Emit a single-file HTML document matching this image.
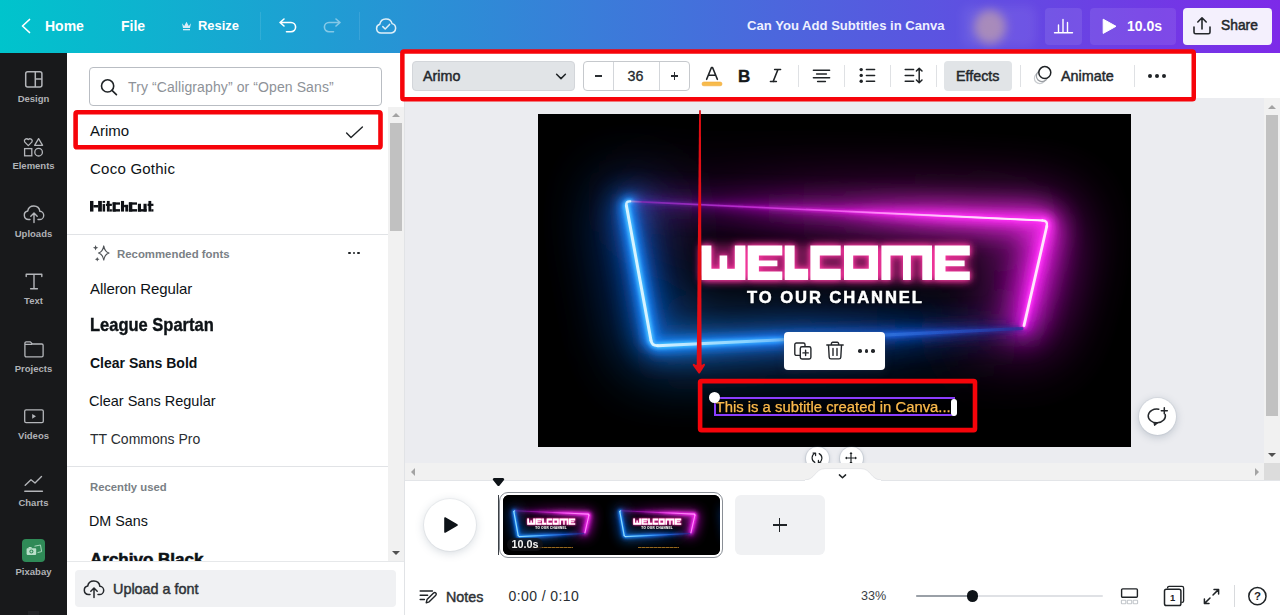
<!DOCTYPE html>
<html><head><meta charset="utf-8">
<style>
*{box-sizing:border-box;margin:0;padding:0}
html,body{width:1280px;height:615px;overflow:hidden;background:#fff;font-family:"Liberation Sans",sans-serif;}
.abs{position:absolute}
#hdr{position:absolute;left:0;top:0;width:1280px;height:53px;background:linear-gradient(90deg,#00c4cc 0%,#7d2ae8 100%);}
.ht{position:absolute;color:#fff;font-weight:bold;font-size:14px;line-height:16px;top:18px;white-space:nowrap}
#nav{position:absolute;left:0;top:53px;width:67.3px;height:562px;background:#18191b}
.nl{position:absolute;width:67px;left:0;text-align:center;color:#b0b2b6;font-size:9.5px;font-weight:bold;line-height:11px}
#panel{position:absolute;left:67px;top:53px;width:337px;height:562px;background:#fff}
.fi{position:absolute;left:90px;font-size:15px;color:#0d1216;white-space:nowrap;line-height:18px}
#tb{position:absolute;left:404px;top:53px;width:876px;height:45px;background:#fff}
#ws{position:absolute;left:404px;top:98px;width:876px;height:380px;background:#ebecf0}
#tl{position:absolute;left:404px;top:478px;width:876px;height:97px;background:#fff}
#bb{position:absolute;left:404px;top:575px;width:876px;height:40px;background:#fff}
.red{position:absolute;border:4px solid #f5050b;border-radius:3px}
.sep{position:absolute;width:1px;background:#dfe1e4;top:65px;height:22px}
</style></head><body>
<div id="hdr"></div>
<div id="nav"></div>
<div id="panel"></div>
<div id="tb"></div>
<div id="ws"></div>
<div id="tl"></div>
<div id="bb"></div>
<!--HEADER-->
<svg class="abs" style="left:18px;top:16px" width="16" height="20" viewBox="0 0 16 20"><path d="M11.5 3.5 L4.5 10 L11.5 16.5" fill="none" stroke="#fff" stroke-width="1.7" stroke-linecap="round" stroke-linejoin="round"/></svg>
<div class="ht" style="left:45px">Home</div>
<div class="ht" style="left:121px">File</div>
<svg class="abs" style="left:181px;top:21px" width="11" height="10" viewBox="0 0 11 10"><path d="M1 2.2 L3.2 5 L5.5 0.8 L7.8 5 L10 2.2 L9 7 L2 7 Z" fill="#d9ecf7"/><rect x="2" y="8" width="7" height="1.3" fill="#d9ecf7"/></svg>
<div class="ht" style="left:198px;font-size:12.9px">Resize</div>
<div class="abs" style="left:260px;top:12px;width:1px;height:28px;background:rgba(255,255,255,.1)"></div>
<svg class="abs" style="left:277px;top:15px" width="22" height="22" viewBox="0 0 22 22"><path d="M7 4 L3 7.5 L7 11 M3.5 7.5 H14 a4.6 4.6 0 0 1 0 9.2 H9.5" fill="none" stroke="#fff" stroke-width="1.6" stroke-linecap="round" stroke-linejoin="round"/></svg>
<svg class="abs" style="left:321px;top:15px;opacity:.45" width="22" height="22" viewBox="0 0 22 22"><path d="M15 4 L19 7.5 L15 11 M18.5 7.5 H8 a4.6 4.6 0 0 0 0 9.2 H12.5" fill="none" stroke="#fff" stroke-width="1.6" stroke-linecap="round" stroke-linejoin="round"/></svg>
<div class="abs" style="left:359px;top:12px;width:1px;height:28px;background:rgba(255,255,255,.1)"></div>
<svg class="abs" style="left:374px;top:14px;opacity:.85" width="24" height="24" viewBox="0 0 24 24"><path d="M7 19 a4.5 4.5 0 0 1 -1.2 -8.8 a6.3 6.3 0 0 1 12.3 -0.6 a4.8 4.8 0 0 1 -0.9 9.4 Z" fill="none" stroke="#fff" stroke-width="1.5" stroke-linejoin="round"/><path d="M8.8 12.6 L11.2 15 L15.6 10.4" fill="none" stroke="#fff" stroke-width="1.5" stroke-linecap="round" stroke-linejoin="round"/></svg>
<div class="ht" id="title" style="left:747px;color:#eef0ff;font-size:13.1px">Can You Add Subtitles in Canva</div>
<div class="abs" style="left:962px;top:6px;width:74px;height:41px;border-radius:8px;background:rgba(255,255,255,.07);filter:blur(5px)"></div>
<div class="abs" style="left:974px;top:10px;width:32px;height:34px;border-radius:50%;background:#b394b4;filter:blur(5px);opacity:.85"></div>
<div class="abs" style="left:1045px;top:8px;width:37px;height:37px;border-radius:4px;background:rgba(255,255,255,.09)"></div>
<svg class="abs" style="left:1053px;top:16px" width="22" height="20" viewBox="0 0 22 20"><path d="M1.5 16.7 H19.5 M5.5 16 V9 M10 16 V3.5 M14.5 16 V6.5" fill="none" stroke="#fff" stroke-width="1.4" stroke-linecap="round"/></svg>
<div class="abs" style="left:1090px;top:8px;width:86px;height:37px;border-radius:4px;background:rgba(255,255,255,.09)"></div>
<svg class="abs" style="left:1102px;top:18px" width="16" height="17" viewBox="0 0 16 17"><path d="M1.2 1.2 L14 8.3 L1.2 15.4 Z" fill="#fff" stroke="#fff" stroke-width="1" stroke-linejoin="round"/></svg>
<div class="ht" style="left:1127px">10.0s</div>
<div class="abs" style="left:1183px;top:8px;width:89px;height:37px;border-radius:4px;background:#f4f0fd"></div>
<svg class="abs" style="left:1192px;top:15px" width="20" height="22" viewBox="0 0 20 22"><path d="M10 14 V3.2 M5.8 7 L10 2.8 L14.2 7 M2 12 V17.2 a1.6 1.6 0 0 0 1.6 1.6 H16.4 a1.6 1.6 0 0 0 1.6 -1.6 V12" fill="none" stroke="#24272b" stroke-width="1.6" stroke-linecap="round" stroke-linejoin="round"/></svg>
<div class="ht" style="left:1221px;color:#24272b;font-size:13.8px;font-weight:normal;-webkit-text-stroke:.5px #24272b">Share</div>

<!--NAV-->
<svg class="abs" style="left:24px;top:70px" width="20" height="19" viewBox="0 0 20 19"><rect x="1.7" y="1.7" width="16.2" height="15.2" rx="2" fill="none" stroke="#b4b6ba" stroke-width="1.5"/><path d="M11.3 1.7 V16.9 M11.3 9 H17.9" stroke="#b4b6ba" stroke-width="1.5" fill="none"/></svg>
<div class="nl" style="top:93px">Design</div>
<svg class="abs" style="left:22px;top:136px" width="23" height="22" viewBox="0 0 23 22"><path d="M6.3 9.6 L2.6 5.9 a2.2 2.2 0 0 1 3.7 -2.3 a2.2 2.2 0 0 1 3.7 2.3 Z" fill="none" stroke="#b4b6ba" stroke-width="1.3" stroke-linejoin="round"/><path d="M16.6 2.6 L20.6 9.3 H12.6 Z" fill="none" stroke="#b4b6ba" stroke-width="1.3" stroke-linejoin="round"/><rect x="2.6" y="12.6" width="7.2" height="7.2" fill="none" stroke="#b4b6ba" stroke-width="1.3"/><circle cx="16.6" cy="16.2" r="3.8" fill="none" stroke="#b4b6ba" stroke-width="1.3"/></svg>
<div class="nl" style="top:160px">Elements</div>
<svg class="abs" style="left:22px;top:203px" width="24" height="22" viewBox="0 0 24 22"><path d="M8 16.5 H6.5 a4.3 4.3 0 0 1 -0.8 -8.5 a6.2 6.2 0 0 1 12.2 0.3 a4.1 4.1 0 0 1 -0.6 8.2 H16" fill="none" stroke="#b4b6ba" stroke-width="1.4" stroke-linecap="round" stroke-linejoin="round"/><path d="M12 19.5 V10.2 M8.8 13.2 L12 10 L15.2 13.2" fill="none" stroke="#b4b6ba" stroke-width="1.4" stroke-linecap="round" stroke-linejoin="round"/></svg>
<div class="nl" style="top:228px">Uploads</div>
<svg class="abs" style="left:24px;top:272px" width="20" height="19" viewBox="0 0 20 19"><path d="M2.2 4.6 V2.2 H17.8 V4.6 M10 2.2 V16.8 M6.6 16.8 H13.4" fill="none" stroke="#b4b6ba" stroke-width="1.4" stroke-linecap="round" stroke-linejoin="round"/></svg>
<div class="nl" style="top:295px">Text</div>
<svg class="abs" style="left:23px;top:340px" width="22" height="19" viewBox="0 0 22 19"><path d="M1.9 3.2 a1.3 1.3 0 0 1 1.3 -1.3 H7.4 L9.4 4 H18.8 a1.3 1.3 0 0 1 1.3 1.3 V15.5 a1.3 1.3 0 0 1 -1.3 1.3 H3.2 a1.3 1.3 0 0 1 -1.3 -1.3 Z M1.9 4.3 H9" fill="none" stroke="#b4b6ba" stroke-width="1.3" stroke-linejoin="round"/></svg>
<div class="nl" style="top:363px">Projects</div>
<svg class="abs" style="left:23px;top:408px" width="22" height="17" viewBox="0 0 22 17"><rect x="1.7" y="1.9" width="18.6" height="12.8" rx="1.4" fill="none" stroke="#b4b6ba" stroke-width="1.3"/><path d="M9.2 5.9 L13 8.3 L9.2 10.7 Z" fill="#b4b6ba"/></svg>
<div class="nl" style="top:430px">Videos</div>
<svg class="abs" style="left:23px;top:474px" width="22" height="20" viewBox="0 0 22 20"><path d="M2.2 11.2 L8 5.8 L12 9 L18.5 2.5" fill="none" stroke="#b4b6ba" stroke-width="1.4" stroke-linecap="round" stroke-linejoin="round"/><path d="M1.8 17.2 H19.4" stroke="#b4b6ba" stroke-width="1.5" stroke-linecap="round"/></svg>
<div class="nl" style="top:497px">Charts</div>
<div class="abs" style="left:22px;top:539px;width:23px;height:23px;border-radius:4px;background:#2f8a57"></div>
<svg class="abs" style="left:25px;top:544px" width="18" height="13" viewBox="0 0 18 13"><path d="M9.5 2.2 L15.5 1 L16.6 7.6 L12.5 8.6" fill="none" stroke="#a9d8bd" stroke-width="1"/><rect x="1.6" y="4.3" width="9.6" height="6.6" rx=".8" fill="#b9e0ca"/><rect x="3.6" y="3" width="3" height="1.6" fill="#b9e0ca"/><circle cx="6.4" cy="7.6" r="2" fill="#2f8a57"/><circle cx="6.4" cy="7.6" r="1" fill="#b9e0ca"/></svg>
<div class="nl" style="top:566px">Pixabay</div>
<div class="abs" style="left:28px;top:611px;width:11px;height:4px;background:#222326"></div>

<!--PANEL-->
<div class="abs" style="left:89px;top:67px;width:293px;height:39px;border:1px solid #b9bdc3;border-radius:4px;background:#fff"></div>
<svg class="abs" style="left:98px;top:77px" width="22" height="20" viewBox="0 0 22 20"><circle cx="9.6" cy="8.9" r="6.1" fill="none" stroke="#1f2326" stroke-width="1.6"/><path d="M14 13.4 L18.4 17.6" stroke="#1f2326" stroke-width="1.7" stroke-linecap="round"/></svg>
<div class="abs" id="ph" style="left:128px;top:78px;font-size:14px;line-height:18px;color:#8e9298;white-space:nowrap;letter-spacing:.1px">Try “Calligraphy” or “Open Sans”</div>
<div class="abs" style="left:388px;top:107px;width:16px;height:455px;background:#f1f1f1"></div>
<div class="abs" style="left:390px;top:123px;width:12px;height:108px;background:#c1c1c1"></div>
<svg class="abs" style="left:391px;top:112px" width="10" height="6" viewBox="0 0 10 6"><path d="M1 5 L5 1 L9 5 Z" fill="#a3a3a3"/></svg>
<svg class="abs" style="left:391px;top:550px" width="10" height="6" viewBox="0 0 10 6"><path d="M1 1 L5 5 L9 1 Z" fill="#505050"/></svg>
<div class="fi" style="top:122px">Arimo</div>
<svg class="abs" style="left:344px;top:124px" width="22" height="16" viewBox="0 0 22 16"><path d="M2.6 9 L7 13.4 L18.4 3" fill="none" stroke="#1f2326" stroke-width="1.4" stroke-linecap="round" stroke-linejoin="round"/></svg>
<div class="fi" id="coco" style="top:160px;letter-spacing:.24px">Coco Gothic</div>
<svg class="abs" style="left:85px;top:195px" width="80" height="24" viewBox="0 0 1280 384" fill="#0e1015"><rect x="80" y="95" width="55" height="170"/><rect x="210" y="95" width="60" height="170"/><rect x="135" y="160" width="75" height="40"/><rect x="282" y="95" width="40" height="30"/><rect x="282" y="145" width="40" height="120"/><rect x="350" y="95" width="45" height="170"/><rect x="335" y="140" width="95" height="35"/><rect x="395" y="228" width="35" height="37"/><rect x="442" y="118" width="50" height="147"/><rect x="442" y="118" width="118" height="37"/><rect x="442" y="226" width="118" height="39"/><rect x="575" y="95" width="50" height="170"/><rect x="625" y="158" width="65" height="37"/><rect x="645" y="158" width="45" height="107"/><rect x="702" y="118" width="55" height="147"/><rect x="702" y="118" width="130" height="37"/><rect x="702" y="226" width="130" height="39"/><rect x="846" y="140" width="50" height="125"/><rect x="936" y="140" width="50" height="125"/><rect x="846" y="226" width="140" height="39"/><rect x="1015" y="95" width="45" height="170"/><rect x="1000" y="140" width="95" height="35"/><rect x="1060" y="228" width="35" height="37"/></svg>
<div class="abs" style="left:67px;top:234px;width:321px;height:1px;background:#e1e3e6"></div>
<svg class="abs" style="left:90px;top:244px" width="20" height="20" viewBox="0 0 20 20"><path d="M13.75 2 Q14.686 7.74 18.95 9 Q14.686 10.26 13.75 16 Q12.814 10.26 8.55 9 Q12.814 7.74 13.75 2 Z" fill="none" stroke="#4f5357" stroke-width="1.25" stroke-linejoin="round"/><path d="M5.6 1.0499999999999998 Q5.869999999999999 3.48 8.3 3.75 Q5.869999999999999 4.02 5.6 6.45 Q5.33 4.02 2.8999999999999995 3.75 Q5.33 3.48 5.6 1.0499999999999998 Z" fill="#4f5357"/><path d="M7.25 12.95 Q7.48 15.02 9.55 15.25 Q7.48 15.48 7.25 17.55 Q7.02 15.48 4.95 15.25 Q7.02 15.02 7.25 12.95 Z" fill="#4f5357"/></svg>
<div class="abs" id="rec" style="left:117px;top:247px;font-size:11.4px;font-weight:bold;line-height:14px;color:#7a7f85;white-space:nowrap">Recommended fonts</div>
<div class="abs" style="left:348px;top:251.5px;width:12px;height:3px"><i class="abs" style="left:0;top:0;width:2.6px;height:2.6px;border-radius:50%;background:#1f2326"></i><i class="abs" style="left:4.6px;top:0;width:2.6px;height:2.6px;border-radius:50%;background:#1f2326"></i><i class="abs" style="left:9.2px;top:0;width:2.6px;height:2.6px;border-radius:50%;background:#1f2326"></i></div>
<div class="fi" id="all" style="top:280px;letter-spacing:-.08px">Alleron Regular</div>
<div class="fi" id="lea" style="top:316px;font-weight:bold;font-size:16.5px;-webkit-text-stroke:.35px #0d1216;transform-origin:0 80%;transform:scaleY(1.08)">League Spartan</div>
<div class="fi" id="csb" style="top:354px;font-weight:bold;font-size:14px">Clear Sans Bold</div>
<div class="fi" id="csr" style="top:392px;left:89px;font-size:14.5px">Clear Sans Regular</div>
<div class="fi" id="ttc" style="top:430px;color:#2a2e32;font-size:14px">TT Commons Pro</div>
<div class="abs" style="left:67px;top:466px;width:321px;height:1px;background:#e1e3e6"></div>
<div class="abs" id="ru" style="left:90px;top:480px;font-size:11.3px;font-weight:bold;line-height:14px;color:#7a7f85;white-space:nowrap">Recently used</div>
<div class="fi" id="dm" style="top:512px;left:89px;font-size:14.3px">DM Sans</div>
<div class="abs" style="left:67px;top:540px;width:321px;height:22px;overflow:hidden"><div class="fi" id="arc" style="left:23px;top:11px;font-weight:bold;font-size:17px;-webkit-text-stroke:.6px #0d1216">Archivo Black</div></div>
<div class="abs" style="left:67px;top:561px;width:337px;height:1px;background:#e6e8ea"></div>
<div class="abs" style="left:75px;top:570px;width:321px;height:37px;border-radius:4px;background:#f0f1f3"></div>
<svg class="abs" style="left:82px;top:578px" width="24" height="22" viewBox="0 0 24 22"><path d="M8 16.5 H6.5 a4.3 4.3 0 0 1 -0.8 -8.5 a6.2 6.2 0 0 1 12.2 0.3 a4.1 4.1 0 0 1 -0.6 8.2 H16" fill="none" stroke="#24272b" stroke-width="1.5" stroke-linecap="round" stroke-linejoin="round"/><path d="M12 19.5 V10.2 M8.8 13.2 L12 10 L15.2 13.2" fill="none" stroke="#24272b" stroke-width="1.5" stroke-linecap="round" stroke-linejoin="round"/></svg>
<div class="abs" id="up" style="left:113px;top:580.5px;font-size:14.4px;line-height:17px;color:#2e3236;-webkit-text-stroke:.45px #2e3236;white-space:nowrap">Upload a font</div>

<!--TOOLBAR-->
<div class="abs" style="left:412px;top:61px;width:163px;height:30px;border-radius:4px;background:#e1e4e7;border:1px solid #d3d6da"></div>
<div class="abs" id="tbf" style="margin-top:.9px;left:423px;top:67px;font-size:14.3px;line-height:17px;color:#24282c;-webkit-text-stroke:.45px #24282c">Arimo</div>
<svg class="abs" style="left:554px;top:71px" width="14" height="11" viewBox="0 0 14 11"><path d="M2.6 3.2 L7 7.6 L11.4 3.2" fill="none" stroke="#1f2326" stroke-width="1.5" stroke-linecap="round" stroke-linejoin="round"/></svg>
<div class="abs" style="left:583px;top:61px;width:106.6px;height:30px;border-radius:4px;border:1px solid #c6c9cd;background:#fff"></div>
<div class="abs" style="left:613px;top:62px;width:1px;height:28px;background:#d3d6da"></div>
<div class="abs" style="left:659px;top:62px;width:1px;height:28px;background:#d3d6da"></div>
<div class="abs" style="left:594.5px;top:75.4px;width:7.6px;height:1.5px;background:#2b2f33"></div>
<div class="abs" id="tb36" style="margin-top:.9px;left:627.6px;top:67px;font-size:14.3px;line-height:17px;color:#24282c;-webkit-text-stroke:.3px #24282c">36</div>
<div class="abs" style="left:670.6px;top:75.4px;width:7.6px;height:1.5px;background:#2b2f33"></div>
<div class="abs" style="left:673.65px;top:72.35px;width:1.5px;height:7.6px;background:#2b2f33"></div>
<svg class="abs" style="left:700px;top:63px" width="24" height="25" viewBox="0 0 24 25"><path d="M6.6 16.4 L11.4 4.6 H12.6 L17.4 16.4 M8.4 12.2 H15.6" fill="none" stroke="#1f2326" stroke-width="1.5" stroke-linejoin="round" stroke-linecap="round"/><rect x="2" y="19" width="20" height="3.8" rx="1.9" fill="#f7bb4b" stroke="#f2a93b" stroke-width=".6"/></svg>
<div class="abs" id="tbB" style="left:738px;top:67px;font-size:17px;font-weight:bold;line-height:20px;color:#15181b;-webkit-text-stroke:.4px #15181b">B</div>
<svg class="abs" style="left:767px;top:67px" width="17" height="17" viewBox="0 0 17 17"><path d="M7.6 2.6 H13.6 M3.4 14.6 H9.4 M10.9 2.6 L6.1 14.6" fill="none" stroke="#1f2326" stroke-width="1.5" stroke-linecap="round"/></svg>
<div class="sep" style="left:798px"></div>
<svg class="abs" style="left:811px;top:67px" width="21" height="17" viewBox="0 0 21 17"><path d="M2.4 3.2 H18.6 M5.6 7 H15.4 M2.4 10.8 H18.6 M6.6 14.6 H14.4" fill="none" stroke="#1f2326" stroke-width="1.5" stroke-linecap="round"/></svg>
<div class="sep" style="left:844px"></div>
<svg class="abs" style="left:857px;top:66px" width="20" height="19" viewBox="0 0 20 19"><circle cx="4.2" cy="3.6" r="1.7" fill="#1f2326"/><circle cx="4.2" cy="9.4" r="1.7" fill="#1f2326"/><circle cx="4.2" cy="15.2" r="1.7" fill="#1f2326"/><path d="M9.4 3.6 H17.6 M9.4 9.4 H17.6 M9.4 15.2 H17.6" stroke="#1f2326" stroke-width="1.5" stroke-linecap="round"/></svg>
<div class="sep" style="left:890px"></div>
<svg class="abs" style="left:902px;top:65px" width="23" height="21" viewBox="0 0 23 21"><path d="M3.2 4.6 H11.6 M3.2 10.4 H11.6 M3.2 16.2 H11.6" stroke="#1f2326" stroke-width="1.5" stroke-linecap="round"/><path d="M17.2 3.6 V17.4 M14.4 6 L17.2 3.2 L20 6 M14.4 15 L17.2 17.8 L20 15" fill="none" stroke="#1f2326" stroke-width="1.5" stroke-linecap="round" stroke-linejoin="round"/></svg>
<div class="sep" style="left:936px"></div>
<div class="abs" style="left:944px;top:61px;width:68px;height:30px;border-radius:4px;background:#e1e4e7"></div>
<div class="abs" id="tbe" style="margin-top:.9px;left:956px;top:67px;font-size:14.3px;line-height:17px;color:#24282c;-webkit-text-stroke:.45px #24282c">Effects</div>
<div class="sep" style="left:1020px"></div>
<svg class="abs" style="left:1032px;top:64px" width="23" height="23" viewBox="0 0 23 23"><circle cx="7.8" cy="14.2" r="5.4" fill="#fff" stroke="#c9ccd0" stroke-width="1.2"/><circle cx="10" cy="12" r="5.6" fill="#fff" stroke="#9a9ea3" stroke-width="1.2"/><circle cx="12.8" cy="8.6" r="6" fill="#fff" stroke="#1f2326" stroke-width="1.5"/></svg>
<div class="abs" id="tba" style="margin-top:.9px;left:1061px;top:67px;font-size:14.4px;line-height:17px;color:#24282c;-webkit-text-stroke:.45px #24282c">Animate</div>
<div class="sep" style="left:1134px"></div>
<div class="abs" style="left:1148px;top:73.9px;width:18px;height:4px"><i class="abs" style="left:0;top:0;width:4.1px;height:4.1px;border-radius:50%;background:#1f2326"></i><i class="abs" style="left:6.8px;top:0;width:4.1px;height:4.1px;border-radius:50%;background:#1f2326"></i><i class="abs" style="left:13.6px;top:0;width:4.1px;height:4.1px;border-radius:50%;background:#1f2326"></i></div>

<!--CANVAS-->
<!--ART-START--><svg width="0" height="0" style="position:absolute">
<defs>
<linearGradient id="gTop" gradientUnits="userSpaceOnUse" x1="87.6" y1="0" x2="510.0" y2="0"><stop offset="0" stop-color="#2f8cff" stop-opacity=".9"/><stop offset=".035" stop-color="#6a32d8" stop-opacity=".4"/><stop offset=".2" stop-color="#a818c8" stop-opacity=".45"/><stop offset=".45" stop-color="#e018e4" stop-opacity=".8"/><stop offset=".7" stop-color="#f41cf0"/><stop offset="1" stop-color="#ff2df5"/></linearGradient>
<linearGradient id="gTopC" gradientUnits="userSpaceOnUse" x1="87.6" y1="0" x2="510.0" y2="0"><stop offset="0" stop-color="#9fd4ff"/><stop offset=".04" stop-color="#7a2cb0"/><stop offset=".3" stop-color="#c02ad0"/><stop offset=".6" stop-color="#ff6cf6"/><stop offset="1" stop-color="#ffe3fd"/></linearGradient>
<linearGradient id="gBot" gradientUnits="userSpaceOnUse" x1="114.0" y1="0" x2="486.0" y2="0"><stop offset="0" stop-color="#1f8dff"/><stop offset=".4" stop-color="#1a72ee"/><stop offset=".7" stop-color="#144ab8" stop-opacity=".75"/><stop offset="1" stop-color="#2a1a80" stop-opacity=".3"/></linearGradient>
<linearGradient id="gBot2" gradientUnits="userSpaceOnUse" x1="114.0" y1="0" x2="486.0" y2="0"><stop offset="0" stop-color="#46c4ff"/><stop offset=".35" stop-color="#2f9cff"/><stop offset=".65" stop-color="#1c5fd8" stop-opacity=".8"/><stop offset="1" stop-color="#2a2590" stop-opacity=".4"/></linearGradient>
<linearGradient id="gBotC" gradientUnits="userSpaceOnUse" x1="114.0" y1="0" x2="486.0" y2="0"><stop offset="0" stop-color="#d9f3ff"/><stop offset=".25" stop-color="#8ad4ff"/><stop offset=".5" stop-color="#3a8cf0"/><stop offset=".75" stop-color="#2458c8"/><stop offset="1" stop-color="#2a2f9a" stop-opacity=".7"/></linearGradient>
<linearGradient id="gTop2" gradientUnits="userSpaceOnUse" x1="87.6" y1="0" x2="510.0" y2="0"><stop offset=".5" stop-color="#ff30f6" stop-opacity="0"/><stop offset=".75" stop-color="#ff30f6" stop-opacity=".8"/><stop offset="1" stop-color="#ff30f6"/></linearGradient>
<linearGradient id="gTop2C" gradientUnits="userSpaceOnUse" x1="87.6" y1="0" x2="510.0" y2="0"><stop offset=".5" stop-color="#ffd0fb" stop-opacity="0"/><stop offset=".8" stop-color="#ffd8fc" stop-opacity=".9"/><stop offset="1" stop-color="#fff0fe"/></linearGradient>
<linearGradient id="gRight" gradientUnits="userSpaceOnUse" x1="0" y1="106.8" x2="0" y2="211.6"><stop offset="0" stop-color="#ff2df5"/><stop offset=".8" stop-color="#f01ff0"/><stop offset="1" stop-color="#c818d8"/></linearGradient>
<filter id="b40" filterUnits="userSpaceOnUse" x="-150" y="-150" width="893" height="633"><feGaussianBlur stdDeviation="32"/></filter>
<filter id="b16" filterUnits="userSpaceOnUse" x="-150" y="-150" width="893" height="633"><feGaussianBlur stdDeviation="13"/></filter>
<filter id="b6" filterUnits="userSpaceOnUse" x="-150" y="-150" width="893" height="633"><feGaussianBlur stdDeviation="5"/></filter>
<filter id="b2" filterUnits="userSpaceOnUse" x="-150" y="-150" width="893" height="633"><feGaussianBlur stdDeviation="1.8"/></filter>
<filter id="b05" filterUnits="userSpaceOnUse" x="-150" y="-150" width="893" height="633"><feGaussianBlur stdDeviation=".45"/></filter>
<filter id="bw" filterUnits="userSpaceOnUse" x="-150" y="-150" width="893" height="633"><feGaussianBlur stdDeviation="2.6"/></filter>
<symbol id="art" viewBox="0 0 593 333" preserveAspectRatio="none">
<rect width="593" height="333" fill="#000"/>
<g filter="url(#b40)" fill="none" stroke-linecap="round" opacity=".8">
 <path d="M88.4,91.6 L113.0,226.6" stroke="#0a56d8" stroke-width="40"/>
 <path d="M119.5,231.7 L484.0,214.6" stroke="url(#gBot)" stroke-width="34" opacity=".9"/>
 <path d="M92.1,87.4 L504.5,106.5" stroke="url(#gTop)" stroke-width="30" opacity=".85"/>
 <path d="M508.8,112.2 L486.0,211.6" stroke="#e010e8" stroke-width="44"/>
</g>
<g filter="url(#b16)" fill="none" stroke-linecap="round" opacity=".9">
 <path d="M88.4,91.6 L113.0,226.6" stroke="#1273f5" stroke-width="20"/>
 <path d="M119.5,231.7 L484.0,214.6" stroke="url(#gBot)" stroke-width="16"/>
 <path d="M92.1,87.4 L504.5,106.5" stroke="url(#gTop)" stroke-width="15"/>
 <path d="M508.8,112.2 L486.0,211.6" stroke="url(#gRight)" stroke-width="28"/>
 <path d="M298.8,97.0 L504.5,106.5" stroke="url(#gTop2)" stroke-width="24"/>
 <path d="M88.4,91.6 Q87.6,87.2 92.1,87.4" stroke="#1273f5" stroke-width="18"/><path d="M113.0,226.6 Q114.0,232.0 119.5,231.7" stroke="#1273f5" stroke-width="18"/><path d="M504.5,106.5 Q510.0,106.8 508.8,112.2" stroke="#ff2df5" stroke-width="22"/>
</g>
<g filter="url(#b6)" fill="none" stroke-linecap="round">
 <path d="M88.4,91.6 L113.0,226.6" stroke="#1e8cff" stroke-width="14"/>
 <path d="M119.5,231.7 L484.0,214.6" stroke="url(#gBot)" stroke-width="13"/>
 <path d="M92.1,87.4 L504.5,106.5" stroke="url(#gTop)" stroke-width="6"/>
 <path d="M508.8,112.2 L486.0,211.6" stroke="url(#gRight)" stroke-width="12"/>
 <path d="M298.8,97.0 L504.5,106.5" stroke="url(#gTop2)" stroke-width="10"/>
 <path d="M88.4,91.6 Q87.6,87.2 92.1,87.4" stroke="#1e8cff" stroke-width="11"/><path d="M113.0,226.6 Q114.0,232.0 119.5,231.7" stroke="#1e8cff" stroke-width="11"/><path d="M504.5,106.5 Q510.0,106.8 508.8,112.2" stroke="#ff2df5" stroke-width="12"/>
</g>
<g filter="url(#b2)" fill="none" stroke-linecap="round">
 <path d="M88.4,91.6 L113.0,226.6" stroke="#46bcff" stroke-width="7"/>
 <path d="M119.5,231.7 L484.0,214.6" stroke="url(#gBot2)" stroke-width="6.5"/>
 <path d="M92.1,87.4 L504.5,106.5" stroke="url(#gTop)" stroke-width="3"/>
 <path d="M508.8,112.2 L486.0,211.6" stroke="#ff3cf6" stroke-width="6"/>
 <path d="M298.8,97.0 L504.5,106.5" stroke="url(#gTop2)" stroke-width="4.2"/>
 <path d="M88.4,91.6 Q87.6,87.2 92.1,87.4" stroke="#49b4ff" stroke-width="5"/><path d="M113.0,226.6 Q114.0,232.0 119.5,231.7" stroke="#49b4ff" stroke-width="5.6"/><path d="M504.5,106.5 Q510.0,106.8 508.8,112.2" stroke="#ff3cf6" stroke-width="5.6"/>
</g>
<g filter="url(#b05)" fill="none" stroke-linecap="round" stroke-linejoin="round">
 <path d="M88.4,91.6 L113.0,226.6" stroke="#d6f3ff" stroke-width="3"/>
 <path d="M119.5,231.7 L484.0,214.6" stroke="url(#gBotC)" stroke-width="3"/>
 <path d="M92.1,87.4 L504.5,106.5" stroke="url(#gTopC)" stroke-width="1.6"/>
 <path d="M508.8,112.2 L486.0,211.6" stroke="#ffe6fd" stroke-width="2.8"/>
 <path d="M298.8,97.0 L504.5,106.5" stroke="url(#gTop2C)" stroke-width="2.2"/>
 <path d="M88.4,91.6 Q87.6,87.2 92.1,87.4" stroke="#cfeeff" stroke-width="2.4"/><path d="M113.0,226.6 Q114.0,232.0 119.5,231.7" stroke="#d9f3ff" stroke-width="2.8"/><path d="M504.5,106.5 Q510.0,106.8 508.8,112.2" stroke="#ffe6fd" stroke-width="2.5"/>
</g>
<rect x="163" y="130" width="270" height="38" fill="#c02888" opacity=".5" filter="url(#b6)"/>
<path d="M163.4,131.5 H173.4 V154.8 H181.6 V141.6 H189.2 V154.8 H196.8 V131.5 H207.4 V166.0 H163.4 Z M209.7,131.5 H244.3 V141.5 H220.9 V146.6 H239.4 V152.2 H220.9 V157.4 H244.3 V166.0 H209.7 Z M246.7,131.5 H256.6 V154.8 H270.1 V166.0 H246.7 Z M272.4,131.5 H302.7 V141.5 H281.8 V154.8 H302.7 V166.0 H272.4 Z M306.0,131.5 H340.0 V166.0 H306.0 Z M315.2,141.5 V154.8 H330.8 V141.5 Z M343.4,131.5 H394.0 V166.0 H384.3 V141.5 H372.9 V166.0 H365.0 V141.5 H352.5 V166.0 H343.4 Z M396.7,131.5 H431.8 V141.5 H407.5 V146.6 H426.6 V152.2 H407.5 V157.4 H431.8 V166.0 H396.7 Z" fill="#ff2f9e" filter="url(#b6)" opacity=".9"/>
<path d="M163.4,131.5 H173.4 V154.8 H181.6 V141.6 H189.2 V154.8 H196.8 V131.5 H207.4 V166.0 H163.4 Z M209.7,131.5 H244.3 V141.5 H220.9 V146.6 H239.4 V152.2 H220.9 V157.4 H244.3 V166.0 H209.7 Z M246.7,131.5 H256.6 V154.8 H270.1 V166.0 H246.7 Z M272.4,131.5 H302.7 V141.5 H281.8 V154.8 H302.7 V166.0 H272.4 Z M306.0,131.5 H340.0 V166.0 H306.0 Z M315.2,141.5 V154.8 H330.8 V141.5 Z M343.4,131.5 H394.0 V166.0 H384.3 V141.5 H372.9 V166.0 H365.0 V141.5 H352.5 V166.0 H343.4 Z M396.7,131.5 H431.8 V141.5 H407.5 V146.6 H426.6 V152.2 H407.5 V157.4 H431.8 V166.0 H396.7 Z" fill="#ff3fa6" filter="url(#bw)" opacity=".95"/>
<path d="M163.4,131.5 H173.4 V154.8 H181.6 V141.6 H189.2 V154.8 H196.8 V131.5 H207.4 V166.0 H163.4 Z M209.7,131.5 H244.3 V141.5 H220.9 V146.6 H239.4 V152.2 H220.9 V157.4 H244.3 V166.0 H209.7 Z M246.7,131.5 H256.6 V154.8 H270.1 V166.0 H246.7 Z M272.4,131.5 H302.7 V141.5 H281.8 V154.8 H302.7 V166.0 H272.4 Z M306.0,131.5 H340.0 V166.0 H306.0 Z M315.2,141.5 V154.8 H330.8 V141.5 Z M343.4,131.5 H394.0 V166.0 H384.3 V141.5 H372.9 V166.0 H365.0 V141.5 H352.5 V166.0 H343.4 Z M396.7,131.5 H431.8 V141.5 H407.5 V146.6 H426.6 V152.2 H407.5 V157.4 H431.8 V166.0 H396.7 Z" fill="#fff" fill-rule="evenodd"/>
<text x="209" y="189.2" font-family="Liberation Sans, sans-serif" font-weight="bold" font-size="16.6" fill="#fff" stroke="#fff" stroke-width=".5" textLength="175" lengthAdjust="spacing" style="filter:drop-shadow(0 0 2px rgba(0,0,0,.7))">TO OUR CHANNEL</text>
</symbol>
</defs></svg>
<!--ART-END-->
<svg class="abs" style="left:538px;top:114px" width="593" height="333"><use href="#art" width="593" height="333"/></svg>


<!--float toolbar-->
<div class="abs" style="left:784px;top:332px;width:101px;height:37.8px;border-radius:4px;background:#fff;box-shadow:0 0 0 1px rgba(64,87,109,.07),0 2px 8px rgba(40,50,70,.35)"></div>
<svg class="abs" style="left:792px;top:340px" width="22" height="22" viewBox="0 0 22 22"><path d="M7.6 15.4 H4.4 a1.6 1.6 0 0 1 -1.6 -1.6 V4.6 a1.6 1.6 0 0 1 1.6 -1.6 H11.4 a1.6 1.6 0 0 1 1.6 1.6 V6.4" fill="none" stroke="#24272b" stroke-width="1.4" stroke-linecap="round"/><rect x="8.3" y="6.8" width="10.6" height="12.2" rx="1.7" fill="#fff" stroke="#24272b" stroke-width="1.4"/><path d="M13.6 10.2 V15.6 M10.9 12.9 H16.3" stroke="#24272b" stroke-width="1.4" stroke-linecap="round"/></svg>
<svg class="abs" style="left:824px;top:340px" width="22" height="22" viewBox="0 0 22 22"><path d="M2.8 5 H19.2 M7.4 4.8 V3.6 a1.3 1.3 0 0 1 1.3 -1.3 H13.3 a1.3 1.3 0 0 1 1.3 1.3 V4.8 M4.5 5.2 L5.2 17.2 a1.8 1.8 0 0 0 1.8 1.7 H15 a1.8 1.8 0 0 0 1.8 -1.7 L17.5 5.2 M9 8.4 V15.4 M13 8.4 V15.4" fill="none" stroke="#24272b" stroke-width="1.4" stroke-linecap="round" stroke-linejoin="round"/></svg>
<div class="abs" style="left:858px;top:349.3px;width:18px;height:4px"><i class="abs" style="left:0;top:0;width:3.5px;height:3.5px;border-radius:50%;background:#24272b"></i><i class="abs" style="left:6.7px;top:0;width:3.5px;height:3.5px;border-radius:50%;background:#24272b"></i><i class="abs" style="left:13.4px;top:0;width:3.5px;height:3.5px;border-radius:50%;background:#24272b"></i></div>
<!--subtitle-->
<div class="abs" style="left:714px;top:396.7px;width:241px;height:19.8px;border:2px solid #8b3dff"></div>
<div class="abs" id="sub" style="left:715.6px;top:397.5px;font-size:14.85px;line-height:18px;color:#f9ba4e;-webkit-text-stroke:.25px #f9ba4e;white-space:nowrap;text-shadow:0 0 1px #3a2200,0 1px 1px rgba(0,0,0,.8)">This is a subtitle created in Canva...</div>
<div class="abs" style="left:708.8px;top:391.6px;width:11.4px;height:11.4px;border-radius:50%;background:#fff;box-shadow:0 0 2px rgba(0,0,0,.5)"></div>
<div class="abs" style="left:951px;top:398.5px;width:6px;height:17.5px;border-radius:3px;background:#fff;box-shadow:0 0 2px rgba(0,0,0,.5)"></div>
<!--arrow-->
<svg class="abs" style="left:688px;top:108px" width="24" height="270" viewBox="0 0 24 270"><path d="M11.1 2.2 L12.9 2.2 L13.6 259 L8.7 259 Z" fill="#e20d14"/><path d="M5.8 256.8 L11.2 264.4 L15.9 256.8" fill="#e20d14" stroke="#e20d14" stroke-width="2.2" stroke-linejoin="round" stroke-linecap="round"/></svg>
<!--side btn-->
<div class="abs" style="left:1138.7px;top:397.8px;width:37.5px;height:37.5px;border-radius:50%;background:#fff;box-shadow:0 0 0 1px rgba(64,87,109,.06),0 2px 8px rgba(64,87,109,.28)"></div>
<svg class="abs" style="left:1145px;top:404px" width="26" height="26" viewBox="0 0 26 26"><path d="M13.8 5.2 A8.6 6.9 0 1 0 20.2 10.4" fill="none" stroke="#24272b" stroke-width="1.5" stroke-linecap="round"/><path d="M8.9 18.3 L9.6 21.3 L12.6 18.9" fill="#24272b" stroke="#24272b" stroke-width="1.2" stroke-linejoin="round"/><path d="M19.3 3.7 V9.7 M16.3 6.7 H22.3" stroke="#24272b" stroke-width="1.5" stroke-linecap="round"/></svg>
<!--right scrollbar-->
<div class="abs" style="left:1264px;top:98px;width:16px;height:365px;background:#f1f1f1"></div>
<div class="abs" style="left:1266px;top:115px;width:12px;height:301px;background:#c1c1c1"></div>
<svg class="abs" style="left:1267px;top:104px" width="10" height="6" viewBox="0 0 10 6"><path d="M1 5 L5 1 L9 5 Z" fill="#a3a3a3"/></svg>
<svg class="abs" style="left:1267px;top:452px" width="10" height="6" viewBox="0 0 10 6"><path d="M1 1 L5 5 L9 1 Z" fill="#505050"/></svg>
<!--h scrollbar-->
<div class="abs" style="left:404px;top:463px;width:860px;height:17px;background:#f1f1f1"></div>
<div class="abs" style="left:1264px;top:463px;width:16px;height:17px;background:#dcdcdc"></div>
<svg class="abs" style="left:410px;top:467px" width="6" height="10" viewBox="0 0 6 10"><path d="M5 1 L1 5 L5 9 Z" fill="#a3a3a3"/></svg>
<svg class="abs" style="left:1254px;top:467px" width="6" height="10" viewBox="0 0 6 10"><path d="M1 1 L5 5 L1 9 Z" fill="#a3a3a3"/></svg>
<!--TIMELINE-->
<!--rotate/move btns (clipped by h scrollbar)-->
<div class="abs" style="left:404px;top:440px;width:860px;height:23px;overflow:hidden">
<div class="abs" style="left:401.5px;top:7px;width:23px;height:23px;border-radius:50%;background:#fff;box-shadow:0 0 0 1px rgba(64,87,109,.1),0 1px 4px rgba(64,87,109,.3)"></div>
<div class="abs" style="left:435.5px;top:7px;width:23px;height:23px;border-radius:50%;background:#fff;box-shadow:0 0 0 1px rgba(64,87,109,.1),0 1px 4px rgba(64,87,109,.3)"></div>
<svg class="abs" style="left:406px;top:11px" width="14" height="14" viewBox="0 0 14 14"><path d="M5.4 2 a5.2 5.2 0 0 0 -0.6 9.4 M3 2 H5.6 V4.6 M8.6 12 a5.2 5.2 0 0 0 0.6 -9.4 M11 12 H8.4 V9.4" fill="none" stroke="#1f2326" stroke-width="1.2" stroke-linecap="round" stroke-linejoin="round"/></svg>
<svg class="abs" style="left:440px;top:11px" width="14" height="14" viewBox="0 0 14 14"><path d="M7 1.6 V12.4 M1.6 7 H12.4" stroke="#1f2326" stroke-width="1.2"/><path d="M5.4 3 L7 1.2 L8.6 3 Z M5.4 11 L7 12.8 L8.6 11 Z M3 5.4 L1.2 7 L3 8.6 Z M11 5.4 L12.8 7 L11 8.6 Z" fill="#1f2326"/></svg>
</div>
<!--collapse tab-->
<svg class="abs" style="left:805px;top:466px" width="76" height="14.4" viewBox="0 0 76 14.4"><path d="M0 14.4 C10 14.4 10 2.6 20 2.6 H56 C66 2.6 66 14.4 76 14.4 Z" fill="#fff"/><path d="M0 13.9 C10 13.9 10 2.6 20 2.6 H56 C66 2.6 66 13.9 76 13.9" fill="none" stroke="#dfe1e5" stroke-width=".8"/><path d="M34.4 8.9 L37.5 11.7 L40.6 8.9" fill="none" stroke="#1f2326" stroke-width="1.5" stroke-linecap="round" stroke-linejoin="round"/></svg>
<div class="abs" style="left:404px;top:479.6px;width:401px;height:1px;background:#e3e5e8"></div>
<div class="abs" style="left:881px;top:479.6px;width:399px;height:1px;background:#e3e5e8"></div>
<div class="abs" style="left:404px;top:98px;width:1px;height:517px;background:#e1e3e6"></div>
<!--play-->
<div class="abs" style="left:424px;top:499px;width:52px;height:52px;border-radius:50%;background:#fff;box-shadow:0 0 0 1px rgba(64,87,109,.06),0 2px 10px rgba(64,87,109,.22)"></div>
<svg class="abs" style="left:442px;top:515px" width="18" height="20" viewBox="0 0 18 20"><path d="M3 3 L15 10 L3 17 Z" fill="#0e1318" stroke="#0e1318" stroke-width="1.6" stroke-linejoin="round"/></svg>
<!--playhead-->
<svg class="abs" style="left:492px;top:477px" width="13" height="10" viewBox="0 0 13 10"><path d="M2.2 1 H10.8 a1.4 1.4 0 0 1 1.2 2.1 L7.6 8.4 a1.4 1.4 0 0 1 -2.2 0 L1 3.1 A1.4 1.4 0 0 1 2.2 1 Z" fill="#0e1318"/></svg>
<div class="abs" style="left:497.6px;top:495px;width:1.6px;height:60px;background:#3c4046"></div>
<!--clip-->
<div class="abs" style="left:499.3px;top:491.8px;width:223.8px;height:66.4px;border-radius:9px;border:1.8px solid #8a8f96;background:#fff"></div>
<div class="abs" style="left:502.6px;top:495.2px;width:217.6px;height:59.8px;border-radius:6px;overflow:hidden;background:#000">
<svg class="abs" style="left:-5px;top:0" width="106" height="59.8"><use href="#art" width="106" height="59.8"/></svg>
<svg class="abs" style="left:101px;top:0" width="106" height="59.8"><use href="#art" width="106" height="59.8"/></svg>
<svg class="abs" style="left:207px;top:0" width="106" height="59.8"><use href="#art" width="106" height="59.8"/></svg>
<div class="abs" style="left:29px;top:51.6px;width:41px;height:1.2px;background:repeating-linear-gradient(90deg,#b07a22 0 3px,#6e4c14 3px 4px);opacity:.85"></div>
<div class="abs" style="left:135px;top:51.6px;width:41px;height:1.2px;background:repeating-linear-gradient(90deg,#b07a22 0 3px,#6e4c14 3px 4px);opacity:.85"></div>
<div class="abs" style="left:4px;top:43px;width:36px;height:13px;border-radius:6.5px;background:rgba(20,20,24,.7)"></div>
<div class="abs" id="clipt" style="left:9px;top:43px;font-size:10.8px;font-weight:bold;line-height:13px;color:#f4f4f4">10.0s</div>
</div>
<!--add-->
<div class="abs" style="left:734.5px;top:495px;width:90px;height:60px;border-radius:6px;background:#f0f1f3"></div>
<div class="abs" style="left:772.5px;top:524.3px;width:14px;height:1.5px;background:#1f2326"></div>
<div class="abs" style="left:778.8px;top:518px;width:1.5px;height:14px;background:#1f2326"></div>

<!--BOTTOM-->
<svg class="abs" style="left:418px;top:587px" width="22" height="19" viewBox="0 0 22 19"><path d="M2.2 4 H14.4 M2.2 8.2 H9.6 M2.2 12.4 H6.4" stroke="#1f2326" stroke-width="1.5" stroke-linecap="round"/><path d="M8.2 15.8 L9 12.6 L15.6 6 a1.5 1.5 0 0 1 2.2 2.2 L11.2 14.8 Z" fill="none" stroke="#1f2326" stroke-width="1.4" stroke-linejoin="round"/></svg>
<div class="abs" id="notes" style="left:446px;top:588.5px;font-size:14.3px;line-height:17px;color:#2e3236;-webkit-text-stroke:.45px #2e3236">Notes</div>
<div class="abs" id="time" style="left:508.5px;top:588px;font-size:14px;line-height:17px;color:#2a2e32;letter-spacing:.4px">0:00 / 0:10</div>
<div class="abs" id="pct" style="left:861px;top:588px;font-size:12.6px;line-height:17px;color:#3a3e43">33%</div>
<div class="abs" style="left:915.5px;top:595.2px;width:187.5px;height:1.6px;background:#dfe1e5;border-radius:1px"></div>
<div class="abs" style="left:915.5px;top:595.2px;width:57px;height:1.6px;background:#9aa0a7;border-radius:1px"></div>
<div class="abs" style="left:966.5px;top:590.2px;width:11.6px;height:11.6px;border-radius:50%;background:#0e1318"></div>
<svg class="abs" style="left:1119px;top:586px" width="21" height="21" viewBox="0 0 21 21"><rect x="2.6" y="2.9" width="15.8" height="8.4" rx="1" fill="none" stroke="#1f2326" stroke-width="1.4"/><rect x="2.4" y="14.2" width="4.4" height="3.6" rx=".6" fill="none" stroke="#c3c7cc" stroke-width="1.1"/><rect x="8.3" y="14.2" width="4.4" height="3.6" rx=".6" fill="none" stroke="#c3c7cc" stroke-width="1.1"/><rect x="14.2" y="14.2" width="4.4" height="3.6" rx=".6" fill="none" stroke="#c3c7cc" stroke-width="1.1"/></svg>
<svg class="abs" style="left:1162px;top:584px" width="24" height="24" viewBox="0 0 24 24"><path d="M5.6 4.6 V3.8 a1.4 1.4 0 0 1 1.4 -1.4 H20 a1.6 1.6 0 0 1 1.6 1.6 V17 a1.4 1.4 0 0 1 -1.4 1.4 H19.4" fill="none" stroke="#1f2326" stroke-width="1.3"/><rect x="2.5" y="5.2" width="16.4" height="16.4" rx="1.8" fill="#fff" stroke="#1f2326" stroke-width="1.5"/><text x="10.7" y="17.4" font-family="Liberation Sans, sans-serif" font-size="9.5" font-weight="bold" text-anchor="middle" fill="#1f2326">1</text></svg>
<svg class="abs" style="left:1202px;top:587px" width="19" height="19" viewBox="0 0 19 19"><path d="M11 8 L16.4 2.6 M12 2.4 H16.6 V7 M8 11 L2.6 16.4 M7 16.6 H2.4 V12" fill="none" stroke="#1f2326" stroke-width="1.5" stroke-linecap="round" stroke-linejoin="round"/></svg>
<div class="abs" style="left:1234px;top:585px;width:1px;height:22px;background:#d8dadd"></div>
<svg class="abs" style="left:1246px;top:585px" width="23" height="23" viewBox="0 0 23 23"><circle cx="11.4" cy="11.2" r="8.6" fill="none" stroke="#1f2326" stroke-width="1.5"/><text x="11.4" y="15.4" font-family="Liberation Sans, sans-serif" font-size="11.5" font-weight="bold" text-anchor="middle" fill="#1f2326">?</text></svg>

<!--RED-->
<svg class="abs" style="left:0;top:0;pointer-events:none" width="1280" height="615" viewBox="0 0 1280 615"><rect x="402.35" y="51.45" width="791.40" height="47.80" rx="1.6" fill="none" stroke="#f6040a" stroke-width="4.5"/><rect x="75.60" y="112.30" width="304.90" height="35.00" rx="1.6" fill="none" stroke="#f6040a" stroke-width="4.6"/><rect x="700.10" y="381.10" width="274.90" height="49.00" rx="1.4" fill="none" stroke="#f6040a" stroke-width="4.6"/></svg>
</body></html>
